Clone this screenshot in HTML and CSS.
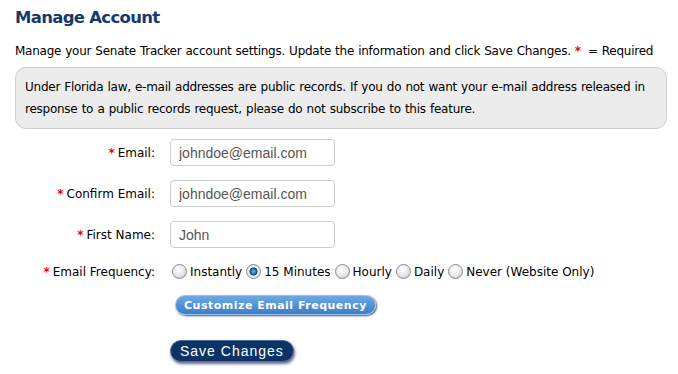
FILE: index.html
```html
<!DOCTYPE html>
<html lang="en">
<head>
  <meta charset="UTF-8">
  <title>Manage Account</title>
  <link rel="stylesheet" href="styles.css">
</head>
<body>
  <div class="page">
    <h1>Manage Account</h1>
    <p class="intro">Manage your Senate Tracker account settings. Update the information and click Save Changes. <span class="req">*</span> = Required</p>

    <div class="notice">
      Under Florida law, e-mail addresses are public records. If you do not want your e-mail address released in response to a public records request, please do not subscribe to this feature.
    </div>

    <form class="account-form">
      <div class="form-row">
        <label for="email"><span class="req">*</span>Email:</label>
        <input type="text" id="email" value="johndoe@email.com">
      </div>
      <div class="form-row">
        <label for="confirm"><span class="req">*</span>Confirm Email:</label>
        <input type="text" id="confirm" value="johndoe@email.com">
      </div>
      <div class="form-row">
        <label for="first"><span class="req">*</span>First Name:</label>
        <input type="text" id="first" value="John">
      </div>
      <div class="form-row freq-row">
        <label><span class="req">*</span>Email Frequency:</label>
        <div class="radios">
          <label class="radio"><input type="radio" name="freq"> Instantly</label>
          <label class="radio"><input type="radio" name="freq" checked> 15 Minutes</label>
          <label class="radio"><input type="radio" name="freq"> Hourly</label>
          <label class="radio"><input type="radio" name="freq">Daily</label>
          <label class="radio"><input type="radio" name="freq">Never (Website Only)</label>
        </div>
      </div>
      <div class="form-row">
        <span></span>
        <button type="button" class="btn-custom">Customize Email Frequency</button>
      </div>
      <div class="form-row save-row">
        <span></span>
        <button type="submit" class="btn-save">Save Changes</button>
      </div>
    </form>
  </div>
</body>
</html>
```

FILE: styles.css
```css
body {
  margin: 0;
  font-family: "DejaVu Sans", Tahoma, sans-serif;
  font-size: 12px;
  color: #000000;
  background: #ffffff;
}

.page {
  padding: 6px 11px 0 15px;
}

h1 {
  margin: 0;
  font-size: 16.5px;
  font-weight: bold;
  color: #163a6b;
  line-height: 24px;
  letter-spacing: -0.7px;
}

.intro {
  margin: 13px 0 0 0;
  line-height: 16px;
  letter-spacing: -0.25px;
  word-spacing: 0.5px;
}

.req {
  color: #ee0000;
  font-weight: bold;
  margin-right: 3px;
}

.notice {
  margin-top: 8px;
  background: #ececec;
  border: 1px solid #cfcfcf;
  border-radius: 11px;
  padding: 8px 9px 8px 9px;
  line-height: 22px;
  letter-spacing: -0.25px;
  word-spacing: 0.6px;
}

.account-form {
  margin-top: 10px;
}

.form-row {
  display: grid;
  grid-template-columns: 140px auto;
  column-gap: 15px;
  align-items: center;
  margin-bottom: 14px;
}

.form-row > label {
  text-align: right;
}

.form-row input[type="text"] {
  width: 165px;
  height: 27px;
  box-sizing: border-box;
  border: 1px solid #cccccc;
  border-radius: 4px;
  padding: 0 8px;
  font-family: "Liberation Sans", Arial, sans-serif;
  font-size: 14px;
  color: #555555;
}

.freq-row {
  margin-top: 16px;
  margin-bottom: 16px;
}

.radios {
  display: flex;
  align-items: center;
  margin-left: 2px;
}

.radio {
  display: flex;
  align-items: center;
  margin-right: 4px;
}

.radio input {
  appearance: none;
  width: 15px;
  height: 15px;
  margin: 0 3px 0 0;
  border: 1px solid #8a8a8a;
  border-radius: 50%;
  background: radial-gradient(circle at 40% 35%, #ffffff 0%, #e6e6e6 55%, #bdbdbd 100%);
}

.radio input:checked {
  background: radial-gradient(circle at 50% 50%, #6fc0f0 0%, #1a6fae 30%, #0f3a66 40%, #f2f2f2 48%, #d0d0d0 100%);
}

.btn-custom {
  justify-self: start;
  margin-left: 5px;
  height: 20px;
  padding: 0 8px;
  border: 1px solid #9fc2e8;
  border-radius: 10px;
  background: linear-gradient(#6aa9e4, #3c7fc6);
  box-shadow: 1px 1px 2px #4b4a7a;
  color: #ffffff;
  font-family: "DejaVu Sans", Verdana, sans-serif;
  font-size: 11px;
  font-weight: bold;
  letter-spacing: 0.5px;
}

.save-row {
  margin-top: 25px;
}

.btn-save {
  justify-self: start;
  height: 22px;
  padding: 0 9px;
  border: 1px solid #4f6f9a;
  border-radius: 11px;
  background: #0c3366;
  box-shadow: 1px 2px 3px #6a6890;
  color: #ffffff;
  font-family: "Liberation Sans", Arial, sans-serif;
  font-size: 14px;
  letter-spacing: 1px;
}
```
